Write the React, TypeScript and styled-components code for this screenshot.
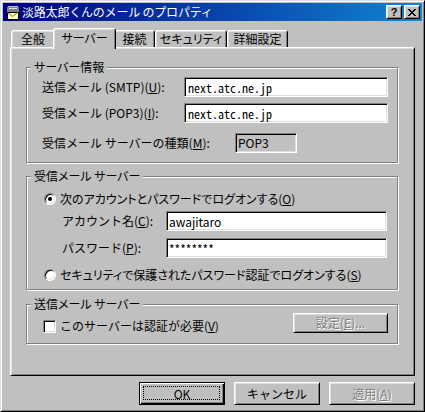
import React from "react";
import styled, { createGlobalStyle, css } from "styled-components";

const GlobalStyle = createGlobalStyle`
  html, body { margin: 0; padding: 0; background: #c0c0c0; }
  body {
    font-family: "Noto Sans CJK JP", "Noto Sans", sans-serif;
    font-size: 12px;
    line-height: 14px;
    color: #000;
  }
  #root { width: 425px; height: 412px; }
  u { text-decoration: underline; text-underline-offset: 1px; }
`;

const Window = styled.div`
  width: 425px;
  height: 412px;
  box-sizing: border-box;
  background: #c0c0c0;
  border: 1px solid;
  border-color: #dfdfdf #000 #000 #dfdfdf;
  box-shadow: inset 1px 1px #fff, inset -1px -1px #808080;
  padding: 2px;
  display: flex;
  flex-direction: column;
`;

const TitleBar = styled.div`
  height: 18px;
  flex: none;
  display: flex;
  align-items: center;
  padding-left: 2px;
  background: linear-gradient(90deg, #000080 0%, #1084d0 100%);
  color: #fff;
`;

const TitleText = styled.span`
  margin-left: 1px;
  font-size: 12px;
  letter-spacing: -0.2px;
`;

const CaptionButtons = styled.div`
  margin-left: auto;
  margin-right: 2px;
  display: flex;
  gap: 2px;
`;

const CaptionButton = styled.div`
  width: 16px;
  height: 14px;
  box-sizing: border-box;
  background: #c0c0c0;
  border: 1px solid;
  border-color: #fff #000 #000 #fff;
  box-shadow: inset 1px 1px #dfdfdf, inset -1px -1px #808080;
  display: flex;
  align-items: center;
  justify-content: center;
  color: #000;
  font-family: "Liberation Sans", sans-serif;
  font-weight: bold;
  font-size: 11px;
  line-height: 12px;
`;

const Body = styled.div`
  flex: 1;
  display: flex;
  flex-direction: column;
  padding: 7px 7px 0 7px;
`;

const TabStrip = styled.div`
  display: flex;
  align-items: flex-end;
  padding-left: 1px;
  margin-bottom: -2px;
  position: relative;
  z-index: 1;
`;

const Tab = styled.div<{ $active?: boolean; $w: number }>`
  box-sizing: border-box;
  width: ${(p) => p.$w}px;
  height: 17px;
  margin-bottom: 2px;
  padding-top: 1px;
  text-align: center;
  background: #c0c0c0;
  border-left: 1px solid #fff;
  border-top: 1px solid #fff;
  border-right: 1px solid #000;
  border-radius: 3px 3px 0 0;
  box-shadow: inset 1px 1px #dfdfdf, inset -1px 0 #808080;
  white-space: nowrap;
  font-feature-settings: "palt";
  ${(p) =>
    p.$active &&
    css`
      width: ${p.$w + 4}px;
      height: 21px;
      margin: 0 -2px;
      padding-top: 2px;
      position: relative;
    `}
`;

const Panel = styled.div`
  height: 329px;
  box-sizing: border-box;
  border: 1px solid;
  border-color: #fff #000 #000 #fff;
  box-shadow: inset 1px 1px #dfdfdf, inset -1px -1px #808080;
  padding: 19px 16px 0 15px;
  display: flex;
  flex-direction: column;
`;

const Group = styled.div<{ $mt?: number; $pt: number; $pb: number; $pr?: number }>`
  position: relative;
  box-sizing: border-box;
  margin-top: ${(p) => p.$mt ?? 0}px;
  border: 1px solid #808080;
  box-shadow: inset 1px 1px #fff, 1px 1px #fff;
  padding: ${(p) => p.$pt}px ${(p) => p.$pr ?? 9}px ${(p) => p.$pb}px 15px;
  display: flex;
  flex-direction: column;
`;

const Legend = styled.span`
  position: absolute;
  top: -8px;
  left: 4px;
  padding: 0 3px 0 3px;
  background: #c0c0c0;
  white-space: nowrap;
  font-feature-settings: "palt";
`;

const Row = styled.div<{ $mt?: number; $h?: number }>`
  display: flex;
  align-items: center;
  height: ${(p) => p.$h ?? 20}px;
  margin-top: ${(p) => p.$mt ?? 0}px;
`;

const Label = styled.span<{ $w: number; $indent?: number }>`
  width: ${(p) => p.$w}px;
  margin-left: ${(p) => p.$indent ?? 0}px;
  flex: none;
  white-space: nowrap;
`;

const sunken = css`
  box-sizing: border-box;
  height: 20px;
  border: 1px solid;
  border-color: #808080 #fff #fff #808080;
  box-shadow: inset 1px 1px #000, inset -1px -1px #dfdfdf;
  outline: none;
  margin: 0;
  font-size: 12px;
`;

const TextField = styled.input<{ $w: number; $mono?: boolean }>`
  ${sunken}
  width: ${(p) => p.$w}px;
  background: #fff;
  color: #000;
  padding: 0 0 0 ${(p) => (p.$mono ? 3 : 2)}px;
  font-family: ${(p) =>
    p.$mono
      ? `"Noto Sans Mono CJK JP", "DejaVu Sans Mono", monospace`
      : `"Noto Sans CJK JP", sans-serif`};
`;

const StaticField = styled.div<{ $w: number }>`
  ${sunken}
  width: ${(p) => p.$w}px;
  background: #c0c0c0;
  padding: 1px 0 0 2px;
  line-height: 16px;
`;

const RadioRow = styled.label<{ $mt?: number }>`
  display: flex;
  align-items: center;
  height: 14px;
  margin-top: ${(p) => p.$mt ?? 0}px;
  margin-left: 2px;
  gap: 4px;
  white-space: nowrap;
  font-feature-settings: "palt";
`;

const Radio = styled.span<{ $checked?: boolean }>`
  position: relative;
  flex: none;
  width: 12px;
  height: 12px;
  box-sizing: border-box;
  border-radius: 50%;
  background: #fff;
  border: 1px solid;
  border-color: #808080 #fff #fff #808080;
  box-shadow: inset 1px 1px #000, inset -1px -1px #dfdfdf;
  ${(p) =>
    p.$checked &&
    css`
      &::after {
        content: "";
        position: absolute;
        left: 3px;
        top: 3px;
        width: 4px;
        height: 4px;
        border-radius: 50%;
        background: #000;
      }
    `}
`;

const Checkbox = styled.span`
  flex: none;
  width: 13px;
  height: 13px;
  box-sizing: border-box;
  background: #fff;
  border: 1px solid;
  border-color: #808080 #fff #fff #808080;
  box-shadow: inset 1px 1px #000, inset -1px -1px #dfdfdf;
`;

const CheckRow = styled.div`
  display: flex;
  align-items: flex-start;
  height: 20px;
`;

const CheckLabel = styled.label`
  display: flex;
  align-items: center;
  gap: 4px;
  margin-top: 6px;
  margin-left: 1px;
  white-space: nowrap;
`;

const Button = styled.button<{ $w: number; $h: number; $default?: boolean; $disabled?: boolean }>`
  position: relative;
  width: ${(p) => p.$w}px;
  height: ${(p) => p.$h}px;
  box-sizing: border-box;
  margin: 0;
  padding: 0;
  background: #c0c0c0;
  font-family: "Noto Sans CJK JP", sans-serif;
  font-size: 12px;
  line-height: 14px;
  color: ${(p) => (p.$disabled ? "#808080" : "#000")};
  text-shadow: ${(p) => (p.$disabled ? "1px 1px #fff" : "none")};
  border: 1px solid;
  border-color: #fff #000 #000 #fff;
  box-shadow: inset 1px 1px #dfdfdf, inset -1px -1px #808080;
  ${(p) =>
    p.$default &&
    css`
      border-color: #000;
      box-shadow: inset 1px 1px #fff, inset -1px -1px #000, inset -2px -2px #808080;
      &::after {
        content: "";
        position: absolute;
        left: 3px;
        top: 3px;
        right: 4px;
        bottom: 4px;
        border: 1px dotted #000;
      }
    `}
`;

const SetButton = styled(Button)`
  margin-left: auto;
`;

const ButtonRow = styled.div`
  display: flex;
  justify-content: flex-end;
  gap: 9px;
  margin-top: 6px;
`;

const TitleIcon = () => (
  <svg width="16" height="16" viewBox="0 0 16 16" shapeRendering="crispEdges">
    <path d="M3 2h10v1h1v6H2V3h1z" fill="#808080" />
    <path d="M3 2h10v1H3z" fill="#c0c0c0" />
    <path d="M4 4h8v1H4z" fill="#dfdfdf" />
    <rect x="2" y="8" width="11" height="7" fill="#ffffc0" stroke="#000" strokeWidth="1" />
    <path d="M2.5 8.5l5 4 5-4" fill="none" stroke="#808000" strokeWidth="1" shapeRendering="geometricPrecision" />
  </svg>
);

const CloseGlyph = () => (
  <svg width="8" height="7" viewBox="0 0 8 7" shapeRendering="crispEdges">
    <path
      d="M0 0h2v1h1v1h2V1h1V0h2v1H7v1H6v1H5v1h1v1h1v1h1v1H6V6H5V5H3v1H2v1H0V6h1V5h1V4h1V3H2V2H1V1H0z"
      fill="#000"
    />
  </svg>
);

export default function App() {
  return (
    <>
      <GlobalStyle />
      <Window>
        <TitleBar>
          <TitleIcon />
          <TitleText>淡路太郎くんのメール のプロパティ</TitleText>
          <CaptionButtons>
            <CaptionButton>?</CaptionButton>
            <CaptionButton>
              <CloseGlyph />
            </CaptionButton>
          </CaptionButtons>
        </TitleBar>
        <Body>
          <TabStrip>
            <Tab $w={44}>全般</Tab>
            <Tab $w={59} $active>
              サーバー
            </Tab>
            <Tab $w={41}>接続</Tab>
            <Tab $w={72}>セキュリティ</Tab>
            <Tab $w={61}>詳細設定</Tab>
          </TabStrip>
          <Panel>
            <Group $pt={9} $pb={9}>
              <Legend>サーバー情報</Legend>
              <Row>
                <Label $w={142}>
                  送信メール (SMTP)(<u>U</u>):
                </Label>
                <TextField $w={204} $mono readOnly value="next.atc.ne.jp" />
              </Row>
              <Row $mt={6}>
                <Label $w={142}>
                  受信メール (POP3)(<u>I</u>):
                </Label>
                <TextField $w={204} $mono readOnly value="next.atc.ne.jp" />
              </Row>
              <Row $mt={10}>
                <Label $w={193}>
                  受信メール サーバーの種類(<u>M</u>):
                </Label>
                <StaticField $w={62}>POP3</StaticField>
              </Row>
            </Group>

            <Group $mt={13} $pt={15} $pb={7} $pr={10}>
              <Legend>受信メール サーバー</Legend>
              <RadioRow>
                <Radio $checked />
                <span>
                  次のアカウントとパスワードでログオンする(<u>O</u>)
                </span>
              </RadioRow>
              <Row $mt={5}>
                <Label $w={104} $indent={20}>
                  アカウント名(<u>C</u>):
                </Label>
                <TextField $w={221} readOnly value="awajitaro" />
              </Row>
              <Row $mt={7}>
                <Label $w={104} $indent={20}>
                  パスワード(<u>P</u>):
                </Label>
                <TextField $w={221} readOnly value="********" />
              </Row>
              <RadioRow $mt={10}>
                <Radio />
                <span>
                  セキュリティで保護されたパスワード認証でログオンする(<u>S</u>)
                </span>
              </RadioRow>
            </Group>

            <Group $mt={14} $pt={8} $pb={10}>
              <Legend>送信メール サーバー</Legend>
              <CheckRow>
                <CheckLabel>
                  <Checkbox />
                  <span>
                    このサーバーは認証が必要(<u>V</u>)
                  </span>
                </CheckLabel>
                <SetButton $w={95} $h={20} $disabled disabled>
                  設定(<u>E</u>)...
                </SetButton>
              </CheckRow>
            </Group>
          </Panel>
          <ButtonRow>
            <Button $w={86} $h={23} $default>
              OK
            </Button>
            <Button $w={86} $h={23}>
              キャンセル
            </Button>
            <Button $w={86} $h={23} $disabled disabled>
              適用(<u>A</u>)
            </Button>
          </ButtonRow>
        </Body>
      </Window>
    </>
  );
}
